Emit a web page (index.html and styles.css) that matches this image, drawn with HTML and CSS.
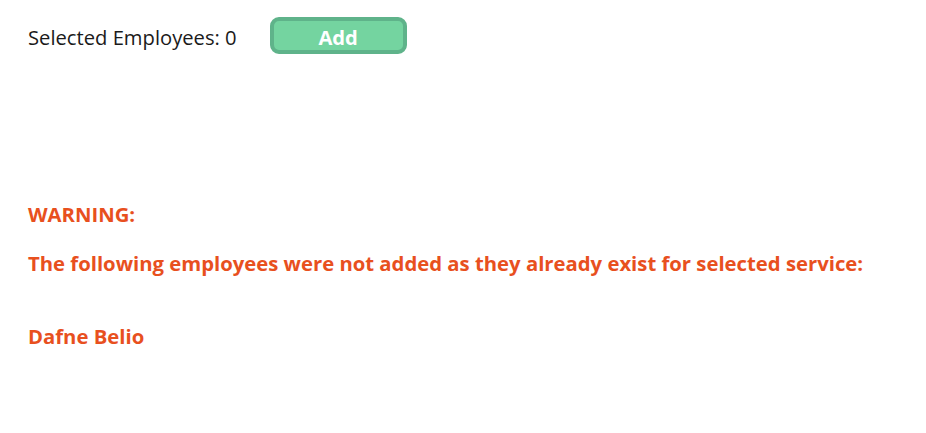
FILE: index.html
```html
<!DOCTYPE html>
<html>
<head>
<meta charset="utf-8">
<link rel="stylesheet" href="styles.css">
</head>
<body>
<div class="page">
  <div class="toolbar">
    <span class="count">Selected Employees: 0</span>
    <button class="add-btn">Add</button>
  </div>
  <div class="warning">
    <p class="warn-title">WARNING:</p>
    <p class="warn-msg">The following employees were not added as they already exist for selected service:</p>
    <p class="warn-name">Dafne Belio</p>
  </div>
</div>
</body>
</html>
```
FILE: styles.css
```css
html, body {
  margin: 0;
  padding: 0;
  background: #ffffff;
}
body {
  font-family: "Open Sans", "Liberation Sans", sans-serif;
}
.page {
  padding: 17px 28px 0 28px;
}
.toolbar {
  display: flex;
  align-items: flex-start;
  gap: 33px;
}
.count {
  margin-top: 7px;
  font-size: 20.2px;
  line-height: 27px;
  color: #1a1a1a;
}
.add-btn {
  box-sizing: border-box;
  display: flex;
  align-items: center;
  justify-content: center;
  width: 137px;
  height: 37px;
  border: 4px solid #5fb38a;
  border-radius: 9px;
  background: #74d4a0;
  color: #ffffff;
  font-family: "Open Sans", "Liberation Sans", sans-serif;
  font-weight: 700;
  font-size: 20.2px;
  line-height: 27px;
  padding: 3px 0 0 0;
}
.warning {
  margin-top: 147px;
  color: #e8501e;
  font-weight: 700;
  font-size: 20.3px;
}
.warning p {
  margin: 0;
  line-height: 27px;
}
.warning .warn-msg {
  margin-top: 22px;
}
.warning .warn-name {
  margin-top: 46px;
}
```
